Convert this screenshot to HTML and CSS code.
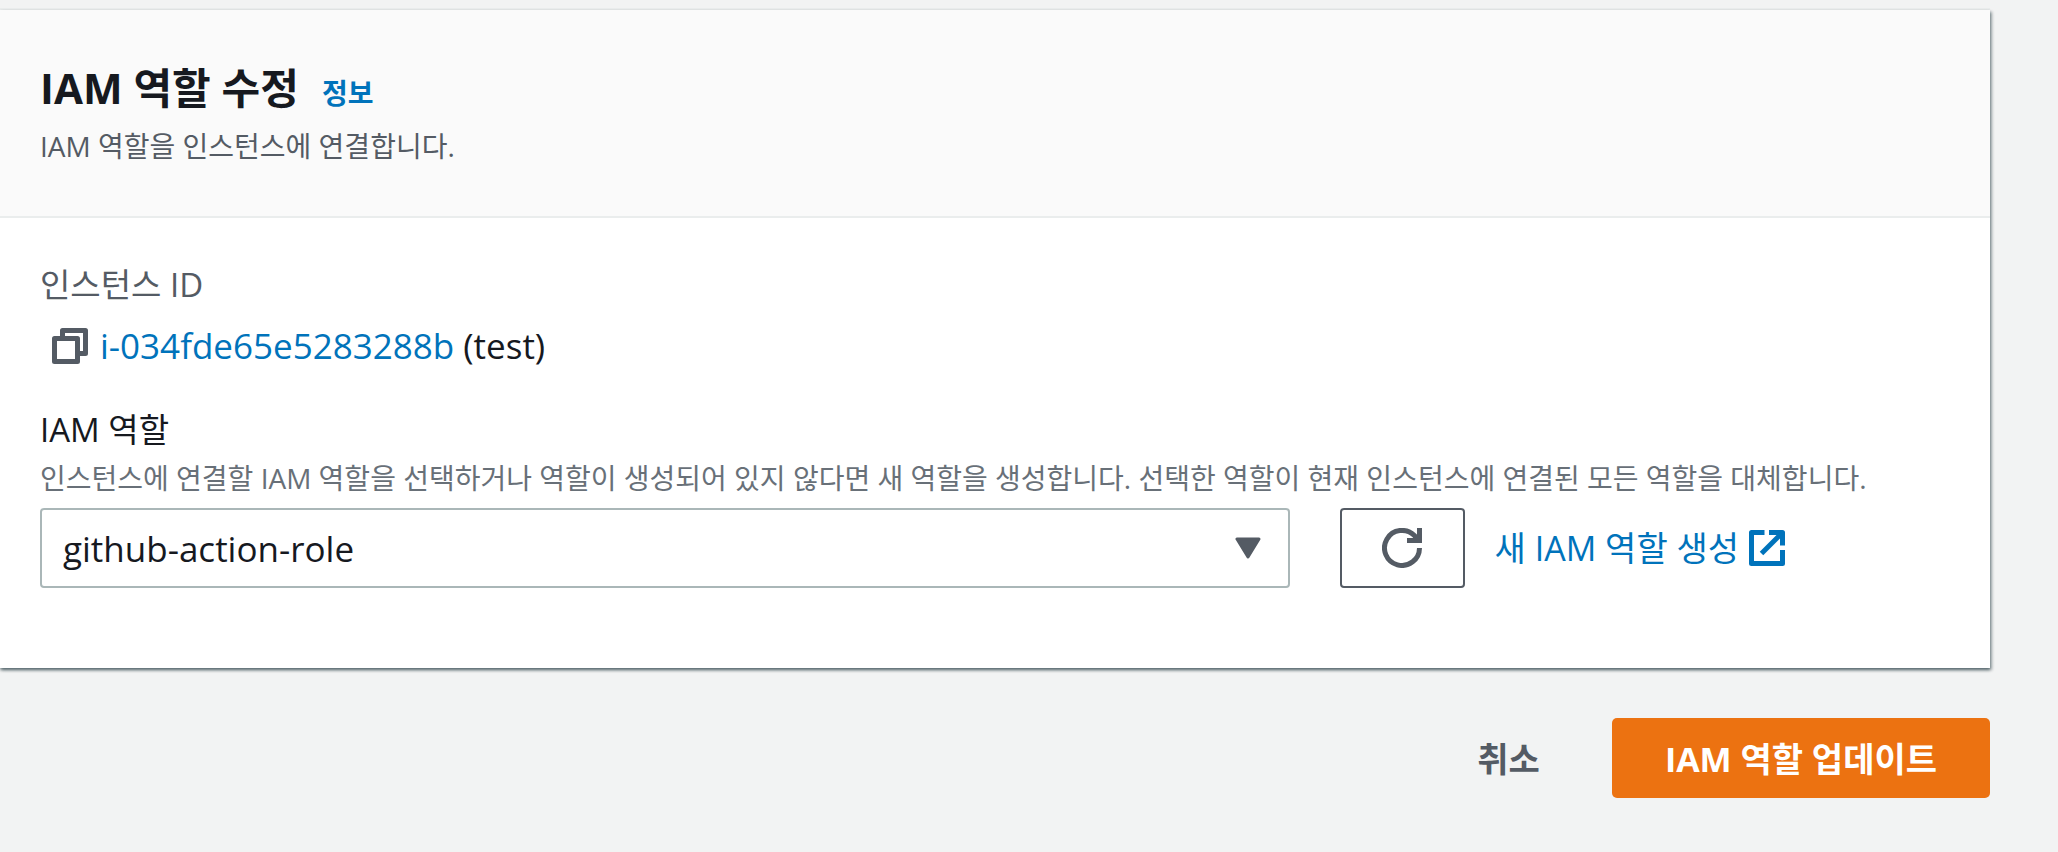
FILE: index.html
```html
<!DOCTYPE html>
<html lang="ko">
  <head>
    <meta charset="UTF-8" />
    <meta name="viewport" content="width=device-width, initial-scale=1" />
    <title>IAM 역할 수정</title>
    <link rel="stylesheet" href="styles.css">
  </head>
  <body>
    <form class="page" autocomplete="off">
      <section class="card">
        <header class="card-header">
          <div class="title-row">
            <h1>IAM 역할 수정</h1>
            <a class="info-link" href="#">정보</a>
          </div>
          <p class="description">IAM 역할을 인스턴스에 연결합니다.</p>
        </header>

        <div class="card-body">
          <div class="instance">
            <div class="label muted">인스턴스 ID</div>
            <div class="instance-value">
              <button type="button" class="copy-button" aria-label="복사">
                <svg viewBox="0 0 36 36" width="36" height="36">
                  <path d="M10.500 8V2.500H33.500V25.500H28" />
                  <path d="M2.500 10.500H25.500V33.500H2.500Z" />
                </svg>
              </button>
              <div><a href="#">i-034fde65e5283288b</a> (test)</div>
            </div>
          </div>

          <div class="role">
            <label class="label" for="iam-role">IAM 역할</label>
            <p class="hint">인스턴스에 연결할 IAM 역할을 선택하거나 역할이 생성되어 있지 않다면 새 역할을 생성합니다. 선택한 역할이 현재 인스턴스에 연결된 모든 역할을 대체합니다.</p>
            <div class="role-row">
              <div class="select-wrap">
                <select id="iam-role" name="role">
                  <option selected>github-action-role</option>
                </select>
                <svg class="caret" viewBox="0 0 26 22" width="26" height="22">
                  <path d="M2 2H24L13 20Z" />
                </svg>
              </div>
              <button type="button" class="refresh-button" aria-label="새로 고침">
                <svg viewBox="0 0 40 40" width="40" height="40">
                  <path d="M37.500 20A17.500 17.500 0 1 1 32.400 7.600L36 11.500" />
                  <path d="M37.500 0V12.500H25" />
                </svg>
              </button>
              <a class="create-link" href="#">
                새 IAM 역할 생성
                <svg viewBox="0 0 36 36" width="36" height="36">
                  <path d="M15.500 2.500H2.500V33.500H33.500V20" />
                  <path d="M20 2.500H33.500V15.500" />
                  <path d="M12.500 23.500L33 3" />
                </svg>
              </a>
            </div>
          </div>
        </div>
      </section>

      <div class="actions">
        <button type="button" class="cancel-button">취소</button>
        <button type="submit" class="primary-button">IAM 역할 업데이트</button>
      </div>
    </form>
  </body>
</html>
```
FILE: styles.css
```css
* {
  box-sizing: border-box;
}
body {
  background: #f2f3f3;
  font-family: "Open Sans", "Noto Sans CJK KR", sans-serif;
  font-size: 33px;
  line-height: 44px;
  margin: 0;
  color: #16191f;
}
h1,
p {
  margin: 0;
}
a {
  color: #0073bb;
  text-decoration: none;
}
button,
select {
  font-family: inherit;
  cursor: pointer;
}
svg {
  display: block;
  fill: none;
  stroke: currentColor;
  stroke-width: 5;
  stroke-linejoin: round;
}
.page {
  padding: 10px 68px 50px 0;
}
.card {
  background: #fff;
  box-shadow: 0 2px 3px rgba(0, 28, 36, 0.5), 2px 2px 3px rgba(0, 28, 36, 0.3),
    0 -2px 0 #eaeded;
}
.card-header {
  background: #fafafa;
  border-bottom: 2px solid #eaeded;
  padding: 50px 40px 48px;
}
.title-row {
  display: flex;
  align-items: baseline;
  gap: 23px;
  margin-bottom: 8px;
}
h1 {
  font-size: 42px;
  line-height: 56px;
  font-weight: 700;
}
.info-link {
  font-size: 28px;
  font-weight: 700;
}
.description {
  color: #545b64;
  font-size: 28px;
}
.card-body {
  padding: 45px 40px 80px;
}
.label {
  display: block;
}
.muted {
  color: #545b64;
}
.instance {
  margin-bottom: 34px;
}
.instance-value {
  display: flex;
  align-items: center;
  gap: 12px;
  margin-top: 11px;
  font-size: 35px;
  line-height: 56px;
}
.copy-button {
  border: none;
  background: none;
  color: #545b64;
  padding: 0 0 0 12px;
}
.hint {
  color: #687078;
  font-size: 28px;
  margin: 4px 0 8px;
}
.role-row {
  display: flex;
  align-items: center;
}
.select-wrap {
  position: relative;
  width: calc(66% - 11px);
  margin-right: 50px;
}
select {
  appearance: none;
  width: 100%;
  height: 80px;
  padding: 0 80px 0 21px;
  border: 2px solid #aab7b8;
  border-radius: 4px;
  background: #fff;
  color: #16191f;
  font-size: 35px;
}
.caret {
  position: absolute;
  top: 29px;
  right: 29px;
  color: #545b64;
  fill: currentColor;
  stroke-width: 3;
  pointer-events: none;
}
.refresh-button {
  display: flex;
  align-items: center;
  justify-content: center;
  width: 125px;
  height: 80px;
  margin-right: 30px;
  border: 2px solid #545b64;
  border-radius: 4px;
  background: #fff;
  color: #545b64;
}
.refresh-button svg {
  stroke-linejoin: miter;
}
.create-link {
  display: flex;
  align-items: center;
  gap: 10px;
  font-size: 34px;
}
.actions {
  display: flex;
  justify-content: flex-end;
  margin-top: 50px;
}
.cancel-button,
.primary-button {
  height: 80px;
  border: none;
  border-radius: 5px;
  font-size: 34px;
  font-weight: 700;
}
.cancel-button {
  padding: 0 72px 2px;
  background: none;
  color: #545b64;
}
.primary-button {
  padding: 0 53px 2px;
  background: #ec7211;
  color: #fff;
}
```
